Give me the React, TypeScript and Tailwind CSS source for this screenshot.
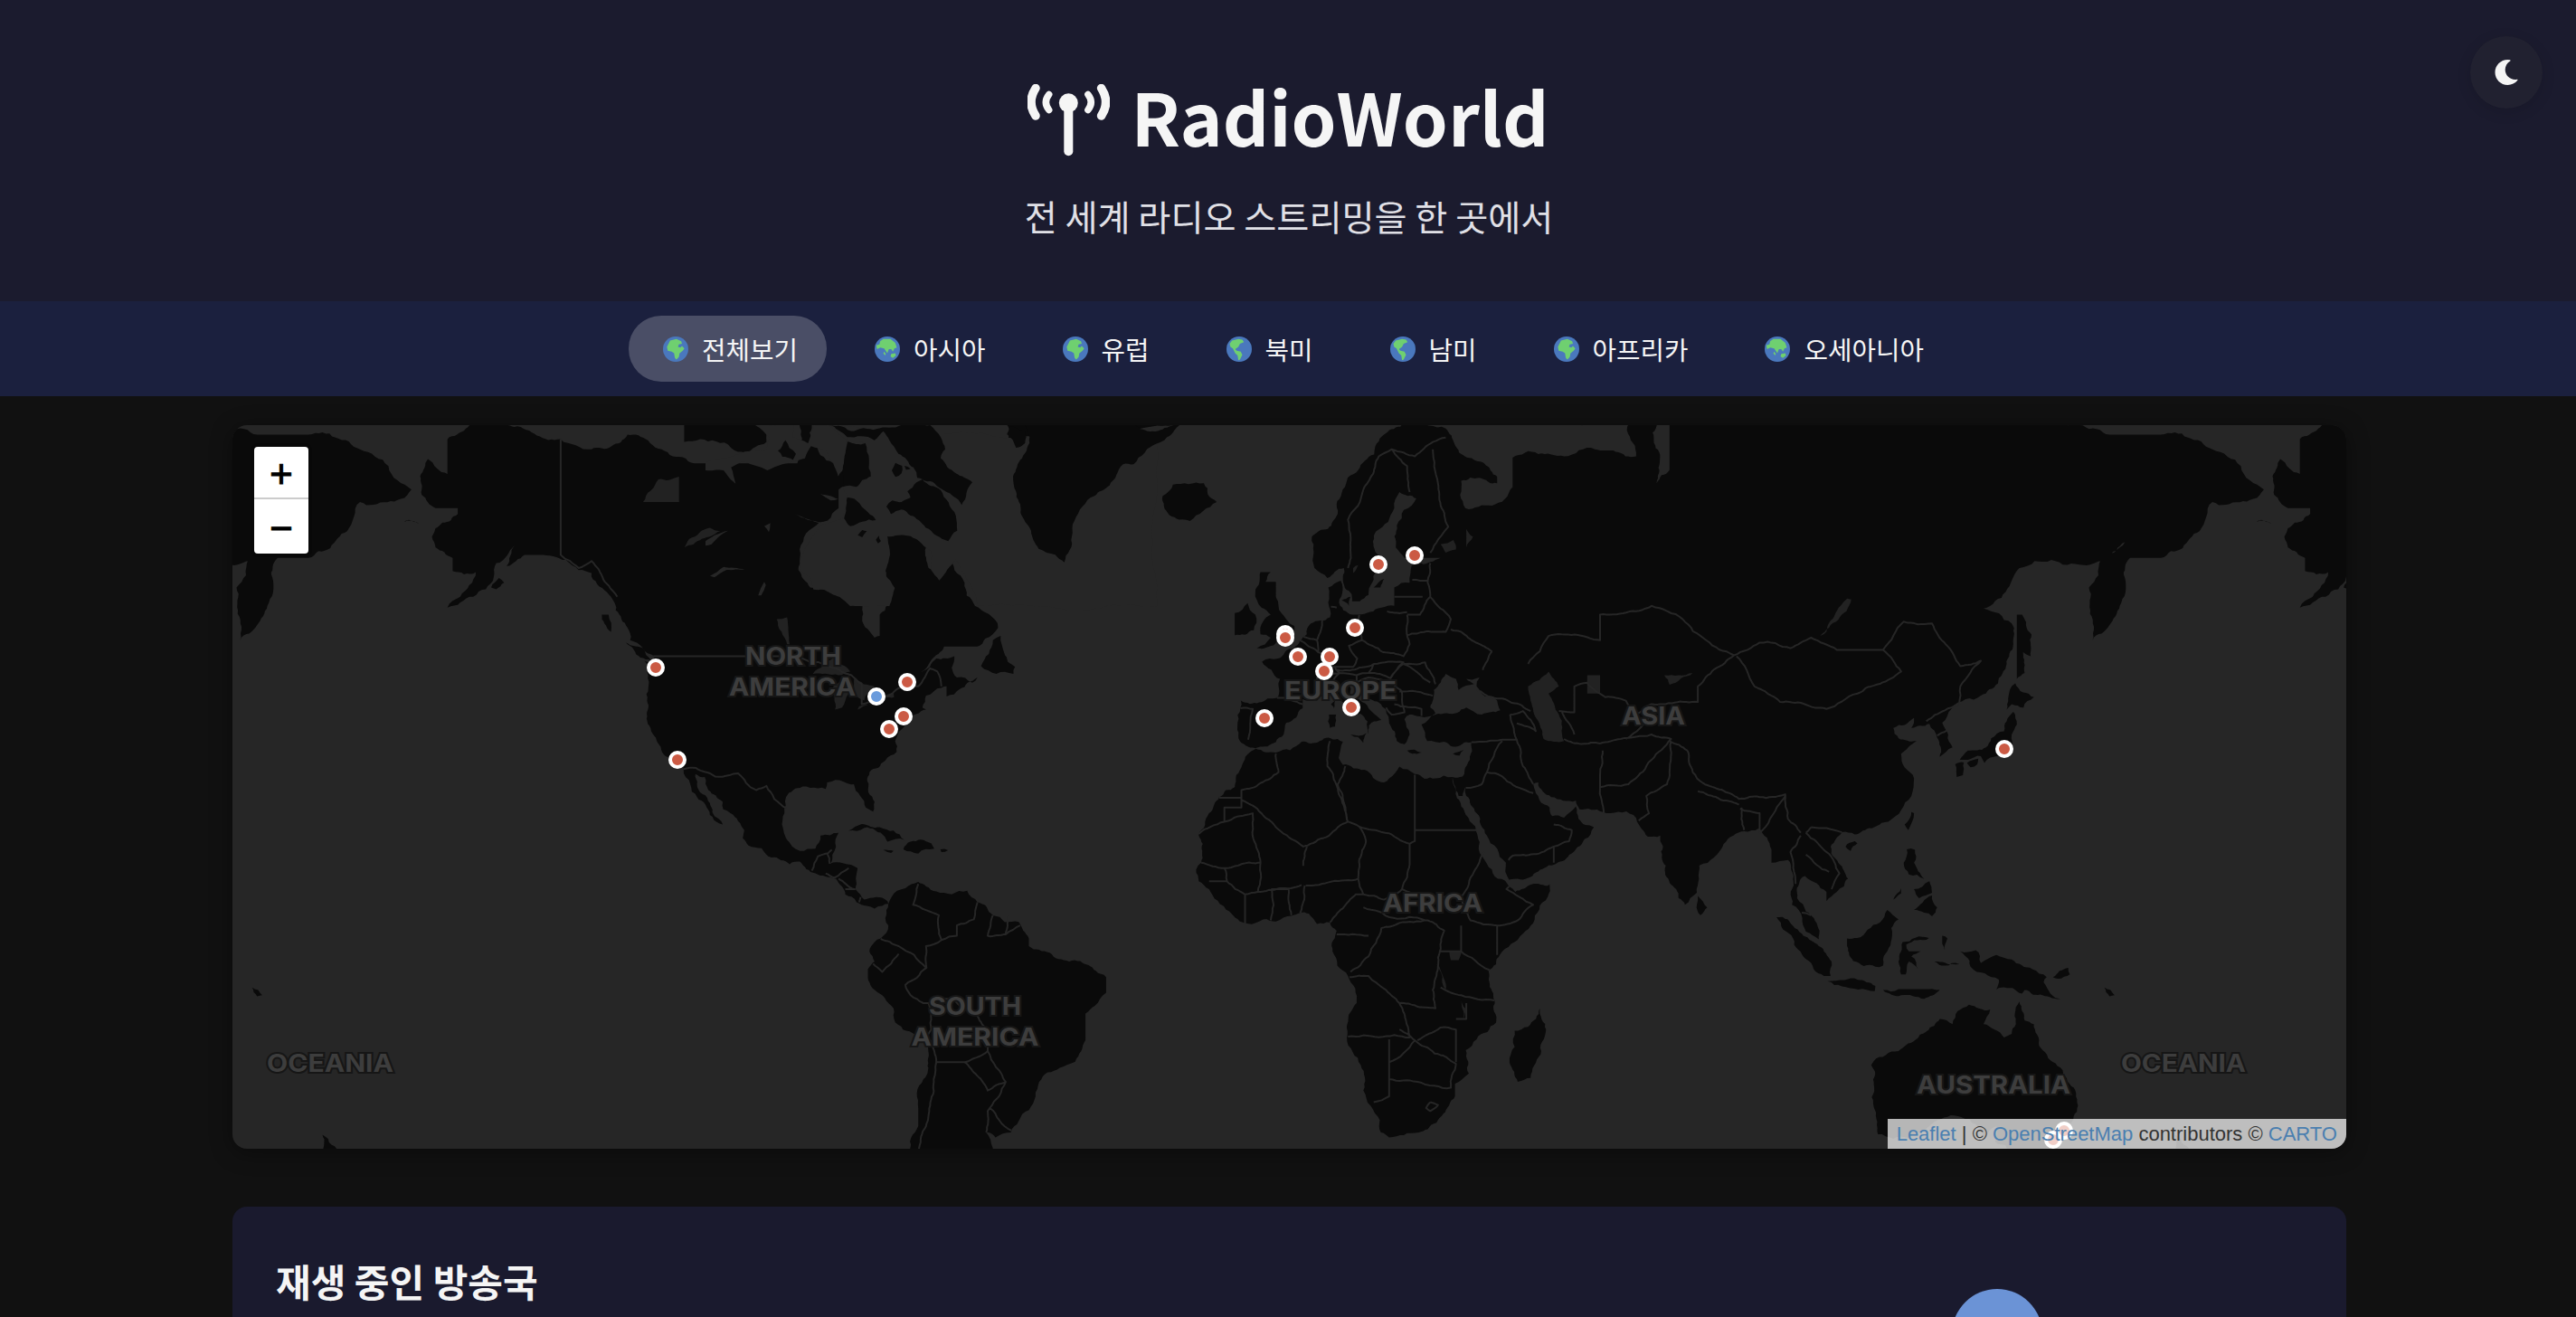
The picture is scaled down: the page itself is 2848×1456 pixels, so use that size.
import { FaMoon } from 'react-icons/fa';

// lon,lat outlines, projected to page pixels below (web mercator, zoom 3 @2x)
const LAND: number[][] = [
  // north + central america
  [-168,65.6,-166.8,68.3,-163,67.2,-163,69.7,-156.5,71.3,-150,70.5,-141,69.7,-135,69,-128,70,-124,69.6,-115,68,-108,68,-100,68,-95,68,-94,71.8,-92,69.5,-88,68,-85,69.5,-81.5,69,-82,67,-87,66,-87,64.5,-92,62.8,-94.5,60,-94.8,58.8,-92.5,57,-88,56.5,-85,55.3,-82.3,55.1,-82.2,53,-80,51.3,-79,51.5,-79,54,-76.8,56.5,-78,58.8,-77.5,60.5,-78,62.4,-73.5,62.4,-70,61,-69.5,59,-67,58.3,-65,60.3,-62.5,57.5,-60.5,55,-56,52.5,-58.5,51.2,-60,50.2,-66.5,50.2,-69,48.5,-71,46.9,-68,48.7,-64.5,49,-65,47.5,-64,46.2,-61,45.5,-60,46.2,-63.5,44.6,-66,43.6,-66,45,-67,44.8,-70,43.7,-70.7,42,-70,41.7,-74,40.6,-74,39.5,-75.5,38,-76,37,-75.7,35.3,-77.9,33.9,-81,32,-81.4,30.5,-80,27,-80.3,25.3,-81.7,26,-82.8,28,-84,30,-86,30.4,-89.2,30.3,-89.5,29.2,-91,29.3,-94,29.6,-97.2,27.8,-97.5,25,-97.8,22.4,-96,19,-94.5,18.2,-91.5,18.6,-90.5,21,-87,21.5,-87.5,19,-88.2,17.5,-88.7,15.8,-86,15.9,-83.3,15,-83.7,11,-82,9,-79.7,9.5,-77.5,8.7,-77.3,8.2,-78.5,7.8,-80,7.3,-81.5,7.8,-83.5,8.5,-85.7,10,-87.5,13,-91.5,14,-94.5,16.2,-96.5,15.7,-100,17,-104.5,19.2,-105.6,20.5,-105.3,22,-108,25,-109.4,25.7,-109.5,27,-112.3,29,-113,31.2,-114.8,31.7,-114.5,30,-112,26.8,-110.3,24,-109.5,23,-110.2,23.2,-112,24.7,-114.5,27.8,-115.8,30,-117.1,32.5,-118.5,34,-120.6,34.6,-122.5,37.5,-124.3,40.4,-124.2,43,-124,46.5,-124.7,48.4,-122.7,47.5,-122.8,49,-125,50,-127.5,51,-128,52.5,-130.3,54.5,-132,56.5,-135,58.5,-137.5,58.8,-140,59.8,-145,60.3,-148,60.3,-151.5,59.2,-150,61.2,-153.5,59.5,-154,58.1,-158,56,-163,54.8,-160.5,56,-157.5,58.6,-162,58.7,-162,60,-165.3,61,-166,62,-161,64,-161,64.5,-165.3,64.5],
  // south america
  [-77.3,8.2,-75.6,10.7,-74,11.2,-71.5,12.4,-70,11.5,-68,10.6,-62,10.7,-60,8.5,-57,6,-52,4.7,-50,1.5,-50,0,-48,-0.7,-44.3,-2.5,-40,-2.9,-37,-4.8,-35,-6,-35,-9,-37.2,-11.5,-39,-13,-39,-18,-41,-21.9,-44,-23,-48,-25.5,-48.7,-28,-52,-32.2,-53.5,-34,-56.5,-34.8,-58.3,-34,-57,-36.5,-57.6,-38.2,-62,-39,-62.2,-40.8,-65,-41,-63.7,-42.6,-65.5,-45,-67.5,-46,-65.8,-47.7,-69,-50.5,-68.4,-52.5,-71,-53.8,-75,-51,-75.5,-46,-73,-42,-73.7,-39,-73.5,-37,-71.5,-33,-71.5,-30,-70.5,-25,-70.2,-18.4,-72,-17,-76.2,-14,-78.5,-9.5,-81.3,-6,-81.3,-4.5,-80,-3,-81,-1,-80,0.8,-78.8,1.5,-77.3,4,-77.7,7],
  // africa
  [-5.9,35.8,-2,35.2,3,36.9,10,37.3,11,36.9,10.2,34.3,11,33.2,15.2,32.4,19,30.3,20,31,22,32.9,25,31.7,29,31,32.3,31.2,32.5,29.9,33.8,27,35.5,24,37.2,21,37.4,18.6,39,15.8,43,12,43.3,11.5,44.5,10.5,51.2,11.9,50.8,9.5,48,4.5,46,2.4,41.5,-1.7,39.3,-4.8,39.5,-7,40.5,-10.5,40.8,-14.7,37,-17.8,34.9,-19.8,35.5,-24,32.8,-25.8,32.8,-28,30.5,-31,27.5,-33.5,25.7,-34,20,-34.8,18.4,-34,18.2,-32,15,-27,14.5,-22.5,11.8,-17.5,13.7,-11,12,-5.8,9,-1,9.8,3,8.5,4.6,6,4.3,4.4,6.3,1,5.9,-2,4.8,-4.5,5.2,-7.5,4.4,-11,6.7,-13.3,8.8,-15,11,-17,12.5,-17.5,14.7,-16.5,16,-16.2,19.5,-17,21,-15,25,-13,27.8,-10,29.5,-9.7,31.5,-8.5,33.3],
  // eurasia
  [-5.5,36,-9,37,-9.5,38.7,-8.8,43,-1.8,43.4,-1.2,46,-4.7,48.3,-1.6,48.7,1.5,50,4,51.7,4.8,53,8.5,53.7,8.2,57,10.6,57.7,10.5,55,12,54.2,14,54,18.5,54.8,21,55,21,57,24,57.5,24.4,59.3,28,59.6,30,60,23,60,21.3,61,21.5,63,25.3,65.3,22,65.8,21,64.5,17.5,62.5,17.3,60.6,19,59.8,16.7,57.5,16,56.2,14.3,55.5,12.8,55.5,11.2,59,8,58,5.5,59,5,62,10,64,14,67.5,19,70,25,71.2,31,70.4,41,67,41,66.5,34,66.7,34.8,64.5,40,64.7,44,66.2,44,68.4,54,68.5,60,69,68,68.5,67,72,72.5,72,72,66.5,74.5,67.5,74.5,72.5,80,73,87,75,104,77.7,113,73.8,127,72.5,140,72.7,160,70,170,70,180,69,190,66,180,65,177.5,62.5,170,60,164,60,163,58,162,55,156.7,51,156,57,163,61.5,155,59.3,142.5,59,135.5,54.7,141,53,140,48,135,43.7,132,43.2,127.5,39.8,129.5,36,127,34.5,126.5,37.5,125,39.6,121.5,39,122,40.5,118,39,119,37.4,122.5,37,119.5,35,122,31,121.5,28,117,23.5,110.5,21.2,108,21.6,105.8,19,109.2,13,107,10.5,105,8.7,105,10.5,100.8,13.5,100,13,99.3,9.3,101,6.7,103.4,3.5,103.5,1.3,101,2.8,100.3,5.5,98.3,8,98.5,13,97.5,16.5,94.3,16,94.3,18.5,91.8,22.3,89,21.8,86.9,21,85,19.5,80.3,15.5,80.2,13,79.8,10.3,77.5,8,75.8,11,73,17,72.7,21,70.3,20.8,69,22.3,67.5,24.7,61.5,25.2,57,25.7,56.3,27.2,51.5,27.8,49,30.3,48,30,48.5,28.5,50.2,26.5,51.2,26,51.7,24.5,54,24.2,56.3,26.2,56.8,24,59.8,22.5,58,20.4,55,17.5,52,15.6,45,13,43.3,12.8,42.7,16,39,21,37,25,35,28,34.8,29.5,34.3,28,33.5,28,32.6,30,32.3,31.2,34.3,31.3,35.9,35,36,36.8,32.5,36.1,30.6,36.9,27.4,37,26.3,39.5,29,41,31.2,41.2,35,42,38,41,41.6,41.6,41,43,37,45,39,47,35,46,36.5,45.3,33.5,44.5,33,46,31,46.7,28.7,44.5,28,42,29,41.2,26,40.7,24,41,23,40.3,24,38,23,36.5,21.5,37,20,39.7,19.4,41.7,14,45.2,13.7,45.6,12.3,45.3,12.4,44,16,41.9,18.5,40.2,16.6,39.8,17,40.5,16,38,15.8,40,12.5,41.5,10.5,43,8.8,44.4,6,43,3.2,43.2,3.2,41.9,0,39.8,-0.5,38,-2,36.8],
  // arctic canada, greenland
  [-117,69.5,-105,68.7,-101,69.5,-105,73,-117,73],
  [-125,72,-117,74,-120,76,-125,74],
  [-73,78,-60,76,-54,70.5,-53,68,-51,64,-48,61,-43.5,60,-41,63.5,-32,68,-22,70.5,-20,75,-30,83,-60,82],
  [-59.3,47.7,-53,46.7,-52.7,47.6,-55.5,51.5,-57,51],
  [-128.3,50.7,-125,50,-123.4,48.4,-125.5,48.8],
  [-133,54,-131.7,54,-131.2,52,-132.5,53],
  [-154.5,57,-153,58,-152,57.5,-153.5,56.8],
  [-170.5,63.5,-168.5,63.2,-171.5,63.3],
  // caribbean
  [-85,21.9,-82.5,23.1,-79,22.5,-74.2,20.2,-77.5,19.9,-78,20.8,-82,22.4],
  [-74.4,18.5,-73,19.9,-69,19.6,-68.4,18.6,-71.5,17.7],
  [-78.3,18.4,-76.3,18.2,-76.8,17.8],
  [-67.2,18.5,-65.7,18.3,-67,18],
  // europe islands
  [-5.7,50,1.4,51.2,1.6,52.7,0,53.5,-1.5,55,-2,56,-2,57.6,-4,57.6,-3,58.6,-5,58.6,-6,56.5,-4.8,54.8,-3,54,-4.5,53.2,-5,51.7,-3,51.3],
  [-10,51.6,-6.3,52.2,-6,54,-7.5,55.3,-10,54.2],
  [-24,65.5,-22,66.4,-16,66.5,-13.5,65,-18.7,63.4,-22.7,63.9],
  [12.5,38,15.6,38.2,15,36.7],
  [8.3,41,9.7,41,9.5,39.2,8.5,39],
  [8.7,42.5,9.5,43,9.4,41.5],
  [23.5,35.5,26.3,35.2,24.5,35],
  [32.4,35,34.5,35.6,33.7,34.7],
  [51.5,71.5,57.5,70.6,58,72,52,72],
  [10.8,55.6,12.5,56,12.2,55],
  [17,57,19,57.9,18.3,57],
  // asia islands
  [80,9.7,81.8,7.5,80.5,6,79.8,8],
  [130.9,34,132.5,35.5,136,36,137,37.4,139.5,38.5,140,40,141.3,41.4,142,39.5,141,38,140.8,35.7,138.8,34.7,136.8,34.4,135.7,33.5,135,34.6,132.5,34],
  [130,33.3,131.7,33.6,131.5,31.5,130.3,31.2],
  [132.3,33.5,134.5,34.2,134.3,33.3,133,32.8],
  [140,41.7,140.3,43.3,141.7,45.4,145.3,43.5,143.3,42,141,42.5],
  [142,46,143.5,46.8,143.2,49.5,144.7,49,143,54,142,54,142,50],
  [120.2,23,121.5,25.2,122,25,120.9,22],
  [108.7,19,110.5,20,111,19.6,109.7,18.2],
  [120,16,120.6,18.5,122.2,18.4,122,16,124,13,121,13.8],
  [122,7,125.5,9.8,126.5,7.5,125.5,5.8,124,6.5],
  [122,11,125,12.5,125.5,10.3,123,9.3],
  [118,9,119.5,11.2,119.5,10.2],
  [95.3,5.6,97.5,5.2,100.5,2,103.5,0,106,-3,105.8,-5.8,104.5,-5.8,101,-2.5,98.5,1.5],
  [105.2,-6.8,108.5,-6.6,111,-6.5,114.5,-7.7,114.4,-8.7,108,-7.8],
  [109,1.5,111,1.6,113,3.2,116.8,7,119,5.2,117.6,3.5,117.5,0.8,116,-3.8,114.5,-4,110.2,-2.9,109,0.5],
  [119.5,-5.5,119,-3,119.8,0.8,124.9,1.6,120.5,0.3,121,-1,123.3,-1,121.5,-2,122.8,-4.5,121,-3,120.4,-5.5],
  [127.5,2,128.5,1.5,128,-0.8,127.5,0.5],
  [126,-3,128,-3.2,130.8,-3.5,128,-3.8],
  [116,-8.5,119,-8.3,125,-8.3,127,-8.4,124,-10.2,119.5,-9.5],
  // new guinea, australia, nz
  [131,-1,134,-0.8,135,-3.3,138,-1.7,141,-2.6,145,-4.5,147.8,-6,147.2,-7,150.7,-10.5,147,-9.5,143.5,-8.5,143,-9.2,139,-8,138,-8.4,138.5,-6.5,133,-4,132.8,-2.8],
  [149,-6,152,-4.2,152.3,-5.5,150,-6.3],
  [159,-8,161,-9.5,160,-9.7],
  [113.7,-22.5,114.2,-26,115,-34.3,118,-35,123.5,-33.9,126,-32.3,131.2,-31.5,134,-32.7,135.8,-34.9,138,-33,137.8,-35.5,139.8,-36,140.5,-38,144,-38.7,146.3,-39.1,150,-37.5,151,-34,153,-31.5,153.5,-27.5,151,-24,149.5,-22.2,146.3,-19,145.3,-15,143.5,-14.3,142.5,-10.7,141.6,-13,141,-16.8,139.5,-17.5,135.5,-15,136.8,-12.2,132.7,-11.3,130.5,-12.5,129.5,-15,127,-14,124.5,-16.3,122.2,-18,119,-20,116.5,-20.7,114.2,-21.8],
  [172.7,-34.4,174.5,-36,176,-37.5,178.5,-37.7,177,-39.5,175.2,-41.6,174.8,-39.8],
  [164,-20.2,167,-22.3,166,-22.2],
  // madagascar
  [49.3,-12,50.5,-16,47.5,-24.8,45,-25.5,43.4,-22,44.4,-16.2,47,-15.5],
];

// inland water, same colour as the sea
const WATER: number[][] = [
  [-92,46.7,-88,48.8,-84.7,47,-87,46.5],
  [-87.7,41.7,-88,45,-85,46,-86.3,42],
  [-84,46,-80,45,-82,43,-84,44],
  [-83.3,41.7,-79,42.8,-79,43,-83,42.2],
  [-79.7,43.3,-76.2,43.5,-76.3,44.1,-79.3,43.8],
  [-125,65,-118,65,-118,67,-122,66.8],
  [-117,61,-110,62.5,-112,62.8,-116,61.8],
  [-99,53.5,-97,53.7,-96.5,50.5,-97,50.5],
  [47,45,51,47,53,45,51,44,53,41,54,37,50,37.3,49,40,47.5,43],
  [58.5,46.5,61,46.5,61,44,58.5,44],
  [103.8,51.5,109.8,55.7,109,55.8,105,52],
  [31,60.5,33,60.8,32.5,61.7,30,61.3],
  [35,61,36.3,62,35,62.7],
  [13,59,14,59.3,13,58.5],
  [31.7,-1,34,-1,33.5,-2.7,32,-2.7],
  [29.2,-3.5,29.8,-4,31,-8.5,30.3,-7],
  [34,-10,34.8,-12,34.6,-14,34.2,-12],
  [73.5,46.5,79,46.8,74.5,45.2],
];

// hudson bay, baffin and west greenland traced from a 3x crop at (780,470)
const ARCTIC_SEA: number[][] = [
  [410,0,470,40,470,50,530,60,548,170,500,205,455,205,470,235,455,310,385,330,345,385,318,440,318,485,350,510,358,545,390,545,445,570,480,600,610,600,628,540,595,495,612,430,603,370,640,365,680,368,750,420,748,480,775,515,830,445,880,530,905,600,1500,600,1500,60,1572,0],
  [0,122,70,110,130,88,200,85,212,40,165,0,292,0,290,40,340,60,360,0,410,0,470,50,455,150,440,170,400,85,350,70,330,110,255,130,205,150,130,120,85,140,100,195,60,150,0,150],
  [0,385,30,365,75,350,50,365,20,395,0,400],
  [15,500,60,470,130,478,70,480,30,505],
  [195,335,215,325,210,355],
  [295,295,385,325,340,312],
  [380,228,440,245,415,250],
  [175,565,195,520,200,530,185,565],
];

const ARCTIC_LAND: number[][] = [
  [410,0,470,40,560,50,590,20,610,50,640,95,690,140,702,175,720,180,780,210,820,235,850,265,885,190,830,160,780,110,795,80,780,40,745,0],
  [670,220,700,190,720,180,780,215,830,300,835,350,805,385,730,340,680,300,650,280,615,295,600,270,620,250,650,255,680,240],
  [470,55,530,60,548,170,500,205,455,205,455,150],
  [460,310,470,240,500,250,540,290,565,315,520,320,480,335],
  [240,85,265,50,300,95,290,115,255,105],
  [505,365,520,348,535,352,520,372],
  [565,380,575,367,582,385,572,392],
  [618,150,630,125,652,135,650,160,630,172],
  [660,135,680,145,665,148],
  [1060,0,1075,40,1050,110,1020,170,1030,220,1045,290,1080,350,1105,410,1160,430,1190,455,1215,370,1250,270,1290,235,1340,200,1385,130,1420,130,1500,60,1572,0],
  [1000,30,1010,5,1060,20,1060,60,1030,75],
];

const BORDERS: number[][] = [
  [-123,49,-95.2,49,-89.5,48,-84.5,46.5,-82.5,45.3,-82.5,42.5,-79,43,-76.5,44,-74.7,45,-71.5,45,-69.2,47.4,-67.8,47,-67,45],
  [-141,69.7,-141,60.3,-137.5,59,-135,59.7,-130,56],
  [-117.1,32.5,-114.7,32.7,-111,31.3,-108.2,31.5,-106.5,31.8,-103,29,-101,29.7,-99.5,27.5,-97.2,25.9],
  [-92.2,14.5,-91,17.2,-89,17.8,-88.3,18.4],
  [-89.2,17.8,-88.7,15.8],[-89.5,14,-87.7,13.2,-85,15],[-87,13,-84,11],[-83.7,11,-85.7,11],[-83,8.5,-82.7,9.5],
  [-71.5,12,-72.5,8,-70,7,-67.5,6,-67,1.2],
  [-60,8.5,-60.7,5.2,-64,4,-64,2,-67,1.2,-70,0,-69.9,-4.2,-74,-7.5,-73,-9.5,-70.5,-11,-69.5,-11,-65,-10,-60,-13.5,-58,-16.3,-58,-20,-54.5,-25.5,-57.6,-30,-53.4,-33.7],
  [-57,6,-58,2,-54.5,2.3,-54,5.8],[-54.5,2.3,-51.7,4],
  [-78.8,1.4,-75.3,0,-70,-4.2],[-80.3,-3.4,-78.5,-5,-75.3,-1.5],
  [-69.5,-11,-69,-16,-70.3,-18.3],[-69,-18,-68,-22,-66,-22,-62.5,-22,-58,-20],
  [-68,-22,-68.5,-25,-70,-33,-71.5,-40,-72,-50],[-62.5,-22,-58,-27,-54.5,-25.5],[-58.3,-34,-58,-30.5,-57.6,-30],
  [-2,35,-1.5,32,-8.7,29,-8.7,27.7],
  [-13,27.7,-8.7,27.7,-8.7,26,-12,26,-12,23.5,-17,21.3],
  [-8.7,27.3,-4.8,25,3.3,19,4.2,19.2,12,23.5,9.7,30,8,33,8.5,37],
  [-12,23.5,-6.5,25,-5,16,-12,15,-16.5,16],
  [11.5,33,10,30,12,23.5,14.2,22.6,24,19.5,25,20,25,31.6],
  [25,22,37,22],
  [24,19.5,24,15.7,22.5,11,27,9.5,34,9.5,35.5,12,36.5,14.3,38.5,18],
  [14.2,22.6,15.5,20,14,13,15,10,19,9,22.5,11],
  [3.3,15.4,4,19],[14,13,3.8,11.7],[-5,16,-5.5,10.5,3,11.8],
  [2.7,6.4,3.6,11.7],[8.5,4.6,13.5,10,15,10],
  [-3,5,-2.8,11,0.5,11,1,6],[-8,4.4,-8,10,-5.5,10.5],[-11.5,12.5,-8,10],[-15,12.5,-11.5,12.5,-12,15],
  [43.3,11.5,42.8,11,48,8,45,5,41,4,35.8,5,34,9.5],[41,-1.7,41,4],[34,4,34,-1,39.5,-4.6],[30,-1,34,-1],
  [12.3,-6,16,-5.8,22,-11,29,-12,28.5,-8.5,29.5,-4,30.7,3,27.5,5,22,4.5,18.5,3.5,16,-2,12.5,-5],
  [15,7.5,27,5],[9.8,2.3,16,2],[30,-8,34,-9.5,40.5,-10.5],[12,-17.3,24,-17.5,22,-11],
  [20,-17.8,20,-28,17,-29],[20,-22,25,-18,33,-22.3,32,-26.5,25.5,-25.5,20,-25],
  [33,-14,35,-14,35,-11],[25.5,-18,30,-15.6,33,-16,33,-22],[22,-16,25,-18],
  [28,-29,29.5,-29.5,28,-30.5,27.2,-30,28,-29],
  [34.9,29.4,38,30,39,32,42,31.3,46.5,29,48,28.5],[52,23,55.5,22,55,20,52,19,52,16],[43.2,16.5,44,17.3,52,19],
  [44.8,37.2,46,33,48,30],[36,36.8,42,37.2,44.8,37.2],[44.8,37.2,44,39.5,43.5,41],[39,32,42,37],
  [61.7,25,61,29.5,61,31.5,61.5,35.5],[54,37.3,61,36.6],
  [61,36.6,65,37.3,71,38,74.8,37.3,71,34,70,33,66.5,30,61,29.5],
  [74.8,37,74.5,32,74,30,70,28,70.5,25,68.5,23.7],
  [78,35.5,79,32,81,30.2,88,27.5,92,27.8,97,28.3,97.5,24,100,21.5],
  [53,41.5,56,41.3,56,45,58.5,45.5,62,43.5,66,43,68,41,71,42.5,80,42.8,80,45,87,49.1],
  [47,48,51,51.5,61,51,61,54,71,55,77,53.5,87,49.1],
  [87,49.1,92,50.7,98,50,102,51.3,107,49.8,116,49.8,119.5,47,111,44,105,41.8,96,42.8,91,45,87.5,49],
  [116,49.8,120,53.2,125.5,53,131,47.7,135,48.4,131,45,130.8,42.5],
  [124.4,40,128,41.6,130.7,42.3],[126.5,37.8,128.4,38.6],
  [100,21,98,18,99,12],[101,21.5,105,18,107.5,14,106,11],[101,17.5,105.5,14.3],[100.2,6.5,102,6],
  [80,28.8,88,26.5],[88.5,26,89,22],[92,21.8,92,25,88.2,25.8],[92,21.5,94,24,97,28],[102,22.5,108,21.6],[101,21.5,102,22.5],
  [74.5,37,78,35.5],[66,37.3,71,41],[56,38,53.5,41.5],
  [12,59,12.5,61,12,63.5,15,66,18,68.5,20.5,69,25,68.5,28.5,69.5,31,69.8],
  [24,65.8,23.5,67.8,20.5,69],[28,60.5,31.5,62.9,29.5,66.5,28.5,69],
  [28,59.5,27.5,57.5,28,56,26,54,23.5,54],[21,56,26.5,56],[24.5,57.8,27.5,57.7],
  [14.2,54,14.7,51,18.8,49.5,22.8,49,24,50.5,23.5,54],[19.6,54.4,23.5,54.3],
  [23.5,51.6,31,52,32,53.5,28,56],[22.8,48,28,45.5],[40,49.6,38.2,47.2],[32,52.3,34,52,40,49.6],
  [22.8,48,27,48.2,29,45.3],[22,44.3,28.5,43.7],[20.3,46.1,22.8,48],
  [7,53.4,6,51,6.2,49.5,8,49,7.6,47.6,13,47.6,13.8,48.7,12.2,50.3,14.7,51],[8.7,54.9,9.8,54.8],
  [2.6,51,6.2,49.5],[7.6,47.6,6,46.2,7,44,7.5,43.8],[-1.8,43.4,3.2,42.5],
  [-8.9,41.9,-6.5,41.8,-7,39.5,-7.4,37.2],[3.4,51.4,6,51],[6,46.2,10.4,46.8,9.5,47.5],
  [7,44,10.4,46.8,13.7,46.5,13.7,45.6],[9.5,47.3,17,48,16,46.8,13.7,46.5],[17,48,22.8,48.2,20.3,46.1,16,46.8],
  [13.7,45.5,16,46.2,19,45.8,22.5,44.3,23,41.3,20.5,41,19.4,42],[21,42.5,26.3,41.8,26.3,40.8],
  [37,44.5,40,43.5,47.5,41.5],[43.5,41,46,41.5,48.5,38.5,44.8,39.7],
];

const LABELS = [
  { t: 'NORTH', x: 877, y: 735, w: 106 },
  { t: 'AMERICA', x: 876, y: 769, w: 140 },
  { t: 'EUROPE', x: 1482, y: 773, w: 124 },
  { t: 'ASIA', x: 1828, y: 801, w: 70 },
  { t: 'AFRICA', x: 1584, y: 1008, w: 110 },
  { t: 'SOUTH', x: 1078, y: 1122, w: 102 },
  { t: 'AMERICA', x: 1078, y: 1156, w: 141 },
  { t: 'AUSTRALIA', x: 2204, y: 1209, w: 170 },
  { t: 'OCEANIA', x: 2414, y: 1185, w: 138 },
  { t: 'OCEANIA', x: 365, y: 1185, w: 140 },
];

const MARKERS = [
  [725, 738], [749, 840], [1003, 754], [999, 792], [983, 806],
  [1524, 624], [1564, 614], [1498, 694], [1421, 701], [1421, 705], [1435, 726],
  [1470, 726], [1464, 742], [1494, 782], [1398, 794], [2216, 828], [2282, 1250], [2270, 1260],
];

const px = (lon: number) => 1422 + 5.689 * lon;
const py = (lat: number) => 1046 - 325.9 * Math.log(Math.tan(Math.PI / 4 + (lat * Math.PI) / 360));

// small seeded wobble so the coarse outlines read as real coast
let seed = 4217;
const rnd = () => {
  seed = (seed * 16807) % 2147483647;
  return seed / 2147483647 - 0.5;
};

const wobble = (x1: number, y1: number, x2: number, y2: number, amp: number, out: number[]) => {
  const dx = x2 - x1;
  const dy = y2 - y1;
  const len = Math.hypot(dx, dy);
  if (len < 5) {
    out.push(x2, y2);
    return;
  }
  const k = rnd() * amp;
  const mx = (x1 + x2) / 2 - dy * k;
  const my = (y1 + y2) / 2 + dx * k;
  wobble(x1, y1, mx, my, amp, out);
  wobble(mx, my, x2, y2, amp, out);
};

const toPath = (pts: number[], close: boolean, amp: number) => {
  const n = pts.length;
  const out = [px(pts[0]), py(pts[1])];
  const stop = close ? n : n - 2;
  for (let i = 0; i < stop; i += 2) {
    const j = (i + 2) % n;
    const x1 = px(pts[i]);
    const y1 = py(pts[i + 1]);
    const x2 = px(pts[j]);
    const y2 = py(pts[j + 1]);
    // 49th parallel and friends stay ruler straight
    if (pts[i] === pts[j] || pts[i + 1] === pts[j + 1]) out.push(x2, y2);
    else wobble(x1, y1, x2, y2, amp, out);
  }
  let d = '';
  for (const shift of [-2048, 0, 2048]) {
    for (let i = 0; i < out.length; i += 2) {
      d += `${i === 0 ? 'M' : 'L'}${(out[i] + shift).toFixed(1)} ${out[i + 1].toFixed(1)}`;
    }
    if (close) d += 'Z';
  }
  return d;
};

const cropPath = (pts: number[], amp: number) => {
  const out = [780 + pts[0] / 3, 470 + pts[1] / 3];
  for (let i = 0; i < pts.length; i += 2) {
    const j = (i + 2) % pts.length;
    wobble(780 + pts[i] / 3, 470 + pts[i + 1] / 3, 780 + pts[j] / 3, 470 + pts[j + 1] / 3, amp, out);
  }
  return `M${out.map((v) => v.toFixed(1)).join(' ')}Z`;
};

const landPath = LAND.map((p) => toPath(p, true, 0.28)).join('');
const waterPath = WATER.map((p) => toPath(p, true, 0.2)).join('');
const borderPath = BORDERS.map((p) => toPath(p, false, 0.16)).join('');
const arcticSeaPath = ARCTIC_SEA.map((p) => cropPath(p, 0.1)).join('');
const arcticLandPath = ARCTIC_LAND.map((p) => cropPath(p, 0.22)).join('');

const WorldMap = () => (
  <svg viewBox="257 470 2337 800" className="block h-full w-full">
    <rect x="257" y="470" width="2337" height="800" fill="#262626" />
    <path d={landPath} fill="#0a0a0a" />
    <path d={arcticSeaPath} fill="#262626" />
    <path d={arcticLandPath} fill="#0a0a0a" />
    <path d={waterPath} fill="#222222" />
    <path d={borderPath} fill="none" stroke="#262626" strokeWidth="2" strokeLinejoin="round" />
    {LABELS.map((l) => (
      <text
        key={l.t + l.x}
        x={l.x}
        y={l.y}
        textAnchor="middle"
        textLength={l.w}
        lengthAdjust="spacingAndGlyphs"
        fontFamily="Inter, sans-serif"
        fontWeight="700"
        fontSize="27"
        fill="#3d3d3d"
        stroke="#161616"
        strokeWidth="4"
        paintOrder="stroke"
      >
        {l.t}
      </text>
    ))}
    {MARKERS.map(([x, y]) => (
      <circle key={`${x}-${y}`} cx={x} cy={y} r="8" fill="#cb5a44" stroke="#ffffff" strokeWidth="4" />
    ))}
    <circle cx="969" cy="770" r="8" fill="#6a9bdc" stroke="#ffffff" strokeWidth="4" />
  </svg>
);

const Antenna = () => (
  <svg width="91" height="80" viewBox="0 0 91 80" fill="none" stroke="#f5f5f5" strokeLinecap="round" className="mt-3 shrink-0">
    <path d="M9 4.5Q-1 20 9 35" strokeWidth="9.5" />
    <path d="M81.6 4.5Q91.6 20 81.6 35" strokeWidth="9.5" />
    <path d="M23.7 11.5Q17 20 23.7 28.5" strokeWidth="7.5" />
    <path d="M66.9 11.5Q73.6 20 66.9 28.5" strokeWidth="7.5" />
    <path d="M45.3 28V74.3" strokeWidth="10" />
    <circle cx="45.3" cy="20.8" r="10.5" fill="#f5f5f5" stroke="none" />
  </svg>
);

const GLOBE_LAND: Record<string, string> = {
  africa: 'M9 5l8-2 6 3 1 3-4 1-1 3 3 1 2-2 3 3-2 3-4 3-1 5-3 3-2-2-1-6-3-2-5-1-1-5 2-4z',
  asia: 'M11 3l9 0 6 5 2 6-3 1-2 4-2-3-3 0-2 5-4-6-5-1-4 2-1-5 4-1 1-4zM21 22l5-1 1 3-4 3-3-2zM12 19l2 3-1 2-2-3z',
  america: 'M7 5l8-2 5 1 2 3-5 2-2 4-4 3 2 2 5 1 2 4-3 6-2 1-1-6-3-3-3-6-3-2-1-4z',
};

const Globe = ({ kind }: { kind: string }) => (
  <svg width="28" height="28" viewBox="0 0 32 32" className="shrink-0">
    <clipPath id={`globe-${kind}`}>
      <circle cx="16" cy="16" r="16" />
    </clipPath>
    <circle cx="16" cy="16" r="16" fill="#4a78bd" />
    <path d={GLOBE_LAND[kind]} fill="#6fd070" clipPath={`url(#globe-${kind})`} />
  </svg>
);

const REGIONS = [
  { name: '전체보기', globe: 'africa' },
  { name: '아시아', globe: 'asia' },
  { name: '유럽', globe: 'africa' },
  { name: '북미', globe: 'america' },
  { name: '남미', globe: 'america' },
  { name: '아프리카', globe: 'africa' },
  { name: '오세아니아', globe: 'asia' },
];

const App = () => {
  return (
    <div className="relative h-screen overflow-hidden bg-[#111111] font-['Noto_Sans_CJK_KR',sans-serif] text-[#f5f5f5]">
      <header className="flex h-[333px] flex-col items-center bg-[#1b1b2e] pt-[69px]">
        <h1 className="flex h-[116px] items-center gap-6 text-[80px] leading-none font-bold">
          <Antenna />
          <span>RadioWorld</span>
        </h1>
        <p className="mt-[23px] pl-[2px] text-[39.2px] leading-[60px] text-[#e0e0e6]">전 세계 라디오 스트리밍을 한 곳에서</p>
        <button className="absolute top-10 right-[37px] flex h-20 w-20 items-center justify-center rounded-full bg-[#212130] shadow-[0_4px_16px_rgba(0,0,0,0.12)]">
          <FaMoon className="h-7 w-7 text-[#f5f5f5]" />
        </button>
      </header>

      <nav className="flex h-[105px] items-center justify-center gap-[15px] bg-[#1b203e] pl-[6px]">
        {REGIONS.map((r, i) => (
          <a
            key={r.name}
            className={`flex h-[73px] items-center gap-[15px] rounded-[36px] pr-8 pl-[38px] text-[28.8px] ${i === 0 ? 'bg-[#4a4e66]' : ''}`}
          >
            <Globe kind={r.globe} />
            <span>{r.name}</span>
          </a>
        ))}
      </nav>

      <main className="ml-[257px] w-[2337px] pt-8">
        <div className="relative h-[800px] overflow-hidden rounded-2xl shadow-[0_4px_24px_rgba(0,0,0,0.4)]">
          <WorldMap />
          <div className="absolute top-5 left-5 w-[68px] overflow-hidden rounded-lg border-4 border-black/20 bg-clip-padding font-['Liberation_Mono',monospace] text-black">
            <div className="flex h-[58px] items-center justify-center border-b-2 border-[#cccccc] bg-white pt-[9px] text-[44px] leading-none [-webkit-text-stroke:1px_black]">+</div>
            <div className="flex h-[60px] items-center justify-center bg-white pt-[9px] text-[44px] leading-none [-webkit-text-stroke:1px_black]">−</div>
          </div>
          <div className="absolute right-0 bottom-0 bg-white/70 px-[10px] font-['Liberation_Sans',sans-serif] text-[22px] leading-[33px] text-[#333333]">
            <span className="text-[#4a7fb0]">Leaflet</span> | © <span className="text-[#4a7fb0]">OpenStreetMap</span> contributors © <span className="text-[#4a7fb0]">CARTO</span>
          </div>
        </div>

        <section className="relative mt-16 h-[300px] rounded-t-2xl bg-[#1a1a2e] px-12 pt-[49px]">
          <h2 className="text-[42px] leading-[66px] font-bold">재생 중인 방송국</h2>
          <div className="absolute top-[91px] left-[1901px] h-[100px] w-[100px] rounded-full bg-[#6b93d6]" />
        </section>
      </main>
    </div>
  );
};

export default App;
